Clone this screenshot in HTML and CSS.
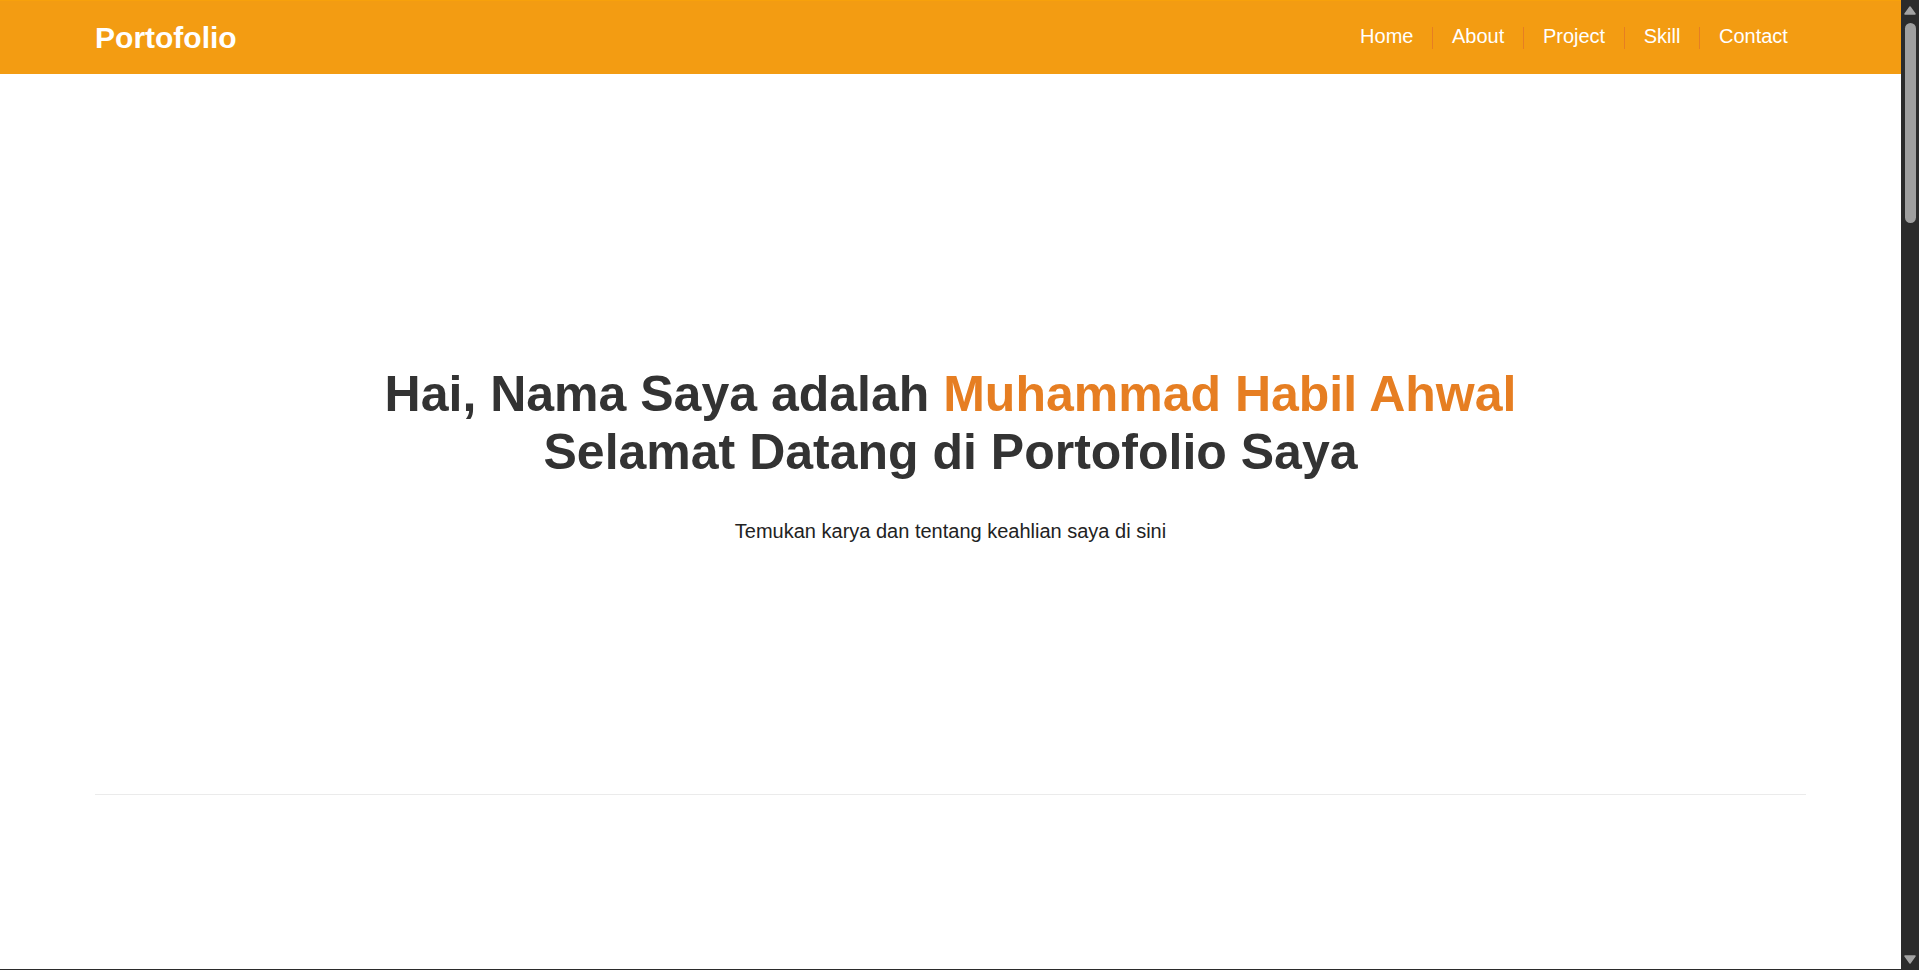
FILE: index.html
```html
<!DOCTYPE html>
<html lang="id">
<head>
<meta charset="utf-8">
<title>Portofolio</title>
<link rel="stylesheet" href="styles.css">
</head>
<body>
<div class="app">
  <div class="page">
    <header class="site-header">
      <div class="container header-inner">
        <a class="logo" href="#">Portofolio</a>
        <nav class="main-nav">
          <ul class="nav-list">
            <li class="nav-item"><a class="nav-link" href="#home">Home</a></li>
            <li class="nav-item"><a class="nav-link" href="#about">About</a></li>
            <li class="nav-item"><a class="nav-link" href="#project">Project</a></li>
            <li class="nav-item"><a class="nav-link" href="#skill">Skill</a></li>
            <li class="nav-item"><a class="nav-link" href="#contact">Contact</a></li>
          </ul>
        </nav>
      </div>
    </header>
    <main>
      <section class="hero" id="home">
        <h1 class="hero-title">Hai, Nama Saya adalah <span class="highlight">Muhammad Habil Ahwal</span><br>Selamat Datang di Portofolio Saya</h1>
        <p class="hero-sub">Temukan karya dan tentang keahlian saya di sini</p>
      </section>
      <div class="container">
        <hr class="divider">
      </div>
      <section class="page-section" id="about"></section>
      <section class="page-section" id="project"></section>
      <section class="page-section" id="skill"></section>
      <section class="page-section" id="contact"></section>
    </main>
  </div>
  <div class="scrollbar" aria-hidden="true">
    <svg class="scroll-arrow" width="12" height="9" viewBox="0 0 12 9"><path d="M6 1 L11 8 L1 8 Z" fill="#a3a3a3" stroke="#a3a3a3" stroke-width="1.5" stroke-linejoin="round"/></svg>
    <div class="scroll-thumb"></div>
    <div class="scroll-track-rest"></div>
    <svg class="scroll-arrow" width="12" height="9" viewBox="0 0 12 9"><path d="M1 1 L11 1 L6 8 Z" fill="#a3a3a3" stroke="#a3a3a3" stroke-width="1.5" stroke-linejoin="round"/></svg>
  </div>
</div>
</body>
</html>
```
FILE: styles.css
```css
html, body {
  margin: 0;
  padding: 0;
  height: 100%;
  overflow: hidden;
}

body {
  font-family: "Liberation Sans", Arial, Helvetica, sans-serif;
  background: #ffffff;
  color: #333333;
}

.app {
  display: flex;
  height: 100vh;
  box-sizing: border-box;
  border-bottom: 1px solid #2b2b2b;
}

.page {
  flex: 1;
  min-width: 0;
  overflow: hidden;
}

.scrollbar {
  width: 18px;
  flex: 0 0 18px;
  background: #2b2b2b;
  display: flex;
  flex-direction: column;
  align-items: center;
  padding: 6px 0 5px;
  box-sizing: border-box;
}

.scroll-arrow {
  display: block;
  flex: 0 0 auto;
}

.scroll-thumb {
  width: 11px;
  height: 200px;
  margin-top: 8px;
  border-radius: 6px;
  background: #9f9f9f;
  flex: 0 0 auto;
}

.scroll-track-rest {
  flex: 1;
}

.container {
  width: 90%;
  margin: 0 auto;
}

.site-header {
  background: #f39c12;
  border-top: 1px solid #f7a10c;
}

.header-inner {
  height: 73px;
  display: flex;
  align-items: center;
  justify-content: space-between;
}

.logo {
  font-size: 30px;
  font-weight: bold;
  color: #ffffff;
  text-decoration: none;
}

.nav-list {
  list-style: none;
  margin: 0;
  padding: 0;
  display: flex;
  align-items: center;
}

.nav-item {
  height: 22px;
}

.nav-item + .nav-item {
  border-left: 1px solid #e67e22;
}

.nav-link {
  display: block;
  margin-top: -2px;
  padding: 0 18.8px;
  font-size: 20px;
  line-height: 22px;
  color: #ffffff;
  text-decoration: none;
}

.nav-item:last-child .nav-link {
  padding-right: 18px;
}

.hero {
  padding: 291px 0 251px;
  text-align: center;
}

.hero-title {
  margin: 0;
  font-size: 50px;
  font-weight: bold;
  color: #333333;
}

.highlight {
  color: #e67e22;
}

.hero-sub {
  margin: 39px 0 0;
  font-size: 20px;
  color: #222222;
}

.divider {
  margin: 0;
  border: 0;
  border-top: 1px solid #ebebeb;
}

.page-section {
  height: 934px;
}
```
